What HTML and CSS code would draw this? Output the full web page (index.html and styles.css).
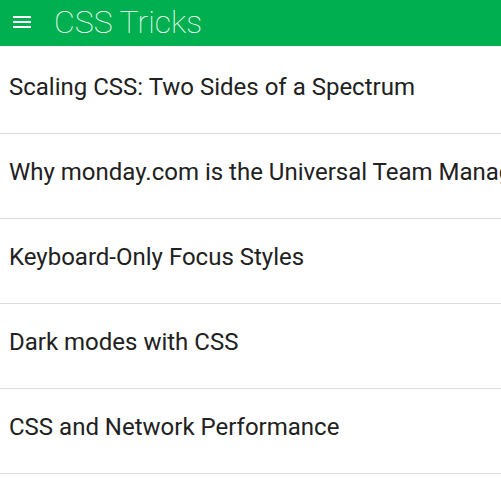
FILE: index.html
```html
<!DOCTYPE html>
<html>
<head>
<meta charset="utf-8">
<link rel="stylesheet" href="styles.css">
</head>
<body>
<header class="bar">
  <svg class="menu" viewBox="0 0 24 24" width="24" height="24"><path d="M3 18h18v-2H3v2zm0-5h18v-2H3v2zm0-7v2h18V6H3z" fill="#fff"/></svg>
  <h1 class="title">CSS Tricks</h1>
</header>
<ul class="list">
  <li class="item">Scaling CSS: Two Sides of a Spectrum</li>
  <li class="item">Why monday.com is the Universal Team Management Tool</li>
  <li class="item">Keyboard-Only Focus Styles</li>
  <li class="item">Dark modes with CSS</li>
  <li class="item">CSS and Network Performance</li>
</ul>
</body>
</html>
```
FILE: styles.css
```css
html, body {
  margin: 0;
  padding: 0;
  background: #fff;
  overflow: hidden;
  height: 500px;
}
body {
  font-family: Roboto, "Liberation Sans", sans-serif;
}
.bar {
  height: 46px;
  background: #00b050;
  display: flex;
  align-items: center;
  padding-left: 10px;
}
.menu {
  flex: none;
  margin-top: -3px;
}
.title {
  margin: -3px 0 0 20px;
  font-weight: 100;
  font-size: 32px;
  color: #fff;
  line-height: 1;
  white-space: nowrap;
}
.list {
  list-style: none;
  margin: 3px 0 0;
  padding: 0;
}
.item {
  height: 76px;
  box-sizing: content-box;
  border-bottom: 1px solid #dcdcdc;
  padding: 0 0 8px 9px;
  font-size: 24px;
  line-height: 1;
  display: flex;
  align-items: center;
  color: #212121;
  white-space: nowrap;
  overflow: hidden;
}
```
